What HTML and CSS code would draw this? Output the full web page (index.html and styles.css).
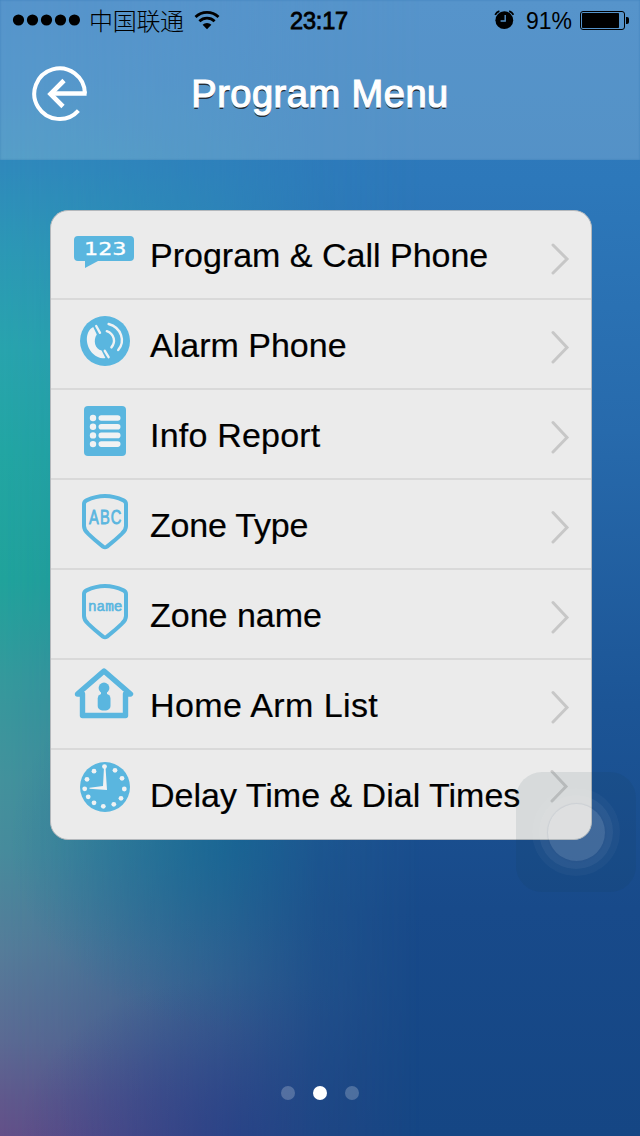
FILE: index.html
```html
<!DOCTYPE html>
<html>
<head>
  <meta charset="utf-8">
  <title>Program Menu</title>
  <link rel="stylesheet" href="styles.css">
</head>

<body>
  <div class="screen">
    <header class="header">
      <!-- status bar -->
      <div class="status">
        <div class="status-left">
          <svg class="signal" width="68" height="12" viewBox="0 0 68 12">
            <circle cx="6.5" cy="6" r="5.6"/>
            <circle cx="20.5" cy="6" r="5.6"/>
            <circle cx="34.5" cy="6" r="5.6"/>
            <circle cx="48.5" cy="6" r="5.6"/>
            <circle cx="62.4" cy="6" r="5.6"/>
          </svg>
          <span class="carrier">中国联通</span>
          <svg class="wifi" width="26" height="20" viewBox="0 0 26 20">
            <path d="M1.5 7 A16.5 16.5 0 0 1 24.5 7" fill="none" stroke="#000" stroke-width="2.8"/>
            <path d="M5.4 11.2 A11 11 0 0 1 20.6 11.2" fill="none" stroke="#000" stroke-width="2.8"/>
            <path d="M8.6 14.8 A6.4 6.4 0 0 1 17.4 14.8 L13 19.2 Z"/>
          </svg>
        </div>
        <span class="time">23:17</span>
        <div class="status-right">
          <svg width="20" height="20" viewBox="0 0 20 20">
            <circle cx="10.3" cy="10.2" r="8.9"/>
            <path d="M1.2 4.8 A7 7 0 0 1 5.4 1.2 M15.2 1.2 A7 7 0 0 1 19.4 4.8" fill="none" stroke="#000" stroke-width="1.8"/>
            <path d="M11.2 5 V11 H6.6" fill="none" stroke="#5592c8" stroke-width="1.4"/>
          </svg>
          <span class="percent">91%</span>
          <svg width="49" height="19" viewBox="0 0 49 19">
            <rect x="0.5" y="0.5" width="44" height="18" rx="2.5" fill="none" stroke="#000"/>
            <rect x="2" y="2" width="37" height="15" rx="0.8"/>
            <path d="M46 6 h1 a2 2 0 0 1 2 2 v3 a2 2 0 0 1 -2 2 h-1 Z"/>
          </svg>
        </div>
      </div>
      <div class="nav">
        <svg class="back" width="56" height="56" viewBox="0 0 56 56" fill="none" stroke="#fff">
          <path d="M52.9 27.5 A25.3 25.3 0 1 0 46.4 44.6" stroke-width="4"/>
          <path d="M54.6 27.5 H20" stroke-width="4.6"/>
          <path d="M32 14.5 L18.5 28 L31 40.5" stroke-width="4.6"/>
        </svg>
        <h1 class="title">Program Menu</h1>
      </div>
    </header>

    <ul class="menu">
      <li class="item first">
        <svg class="icon" viewBox="0 0 100 90">
          <path d="M28 26 H80 a4 4 0 0 1 4 4 V47 a4 4 0 0 1 -4 4 H48 L35 58 V51 H28 a4 4 0 0 1 -4 -4 V30 a4 4 0 0 1 4 -4 Z"/>
          <text class="num" x="34" y="45" textLength="42.5" lengthAdjust="spacingAndGlyphs">123</text>
        </svg>
        <span class="label">Program &amp; Call Phone</span>
        <svg class="arrow" viewBox="0 0 20 34"><path d="M3 3 L17 17 L3 31"/></svg>
      </li>
      <li class="item">
        <svg class="icon" viewBox="0 0 100 90">
          <circle cx="55" cy="41" r="25"/>
          <path class="light" d="M43.2 27 C34.6 31.5 35 46 43 53.8 C47 57.6 51 58.8 55.4 58 L51.6 50.6 C45 49.6 42.8 40 46.8 34.6 Z"/>
          <path class="thin" d="M46.2 26 L50 32.8 M54.8 50.8 L58.6 57.2"/>
          <path class="thin" d="M56.8 31.2 C64.4 34 66 42 61.4 47.4"/>
          <path class="thin" d="M58.6 24 C71.6 27.6 75.6 41.6 68.2 50"/>
        </svg>
        <span class="label">Alarm Phone</span>
        <svg class="arrow" viewBox="0 0 20 34"><path d="M3 2.5 L17 17.5 L3 32"/></svg>
      </li>
      <li class="item">
        <svg class="icon" viewBox="0 0 100 90">
          <rect x="34" y="16" width="42" height="50" rx="4"/>
          <g class="light">
            <circle cx="43" cy="28" r="3.2"/><rect x="48.5" y="25.2" width="22" height="5.6" rx="2.8"/>
            <circle cx="43" cy="36.7" r="3.2"/><rect x="48.5" y="33.9" width="22" height="5.6" rx="2.8"/>
            <circle cx="43" cy="45.4" r="3.2"/><rect x="48.5" y="42.6" width="22" height="5.6" rx="2.8"/>
            <circle cx="43" cy="54.1" r="3.2"/><rect x="48.5" y="51.3" width="22" height="5.6" rx="2.8"/>
          </g>
        </svg>
        <span class="label wide">Info Report</span>
        <svg class="arrow" viewBox="0 0 20 34"><path d="M3 2.5 L17 17.5 L3 32"/></svg>
      </li>
      <li class="item">
        <svg class="icon" viewBox="0 0 100 90">
          <path class="shield" d="M34 24 Q34 21.6 36.5 20.4 Q55 11.6 73.5 20.4 Q76 21.6 76 24 V46 Q76 50 72 53.6 Q66 59.5 57 66.6 Q55 68 53 66.6 Q44 59.5 38 53.6 Q34 50 34 46 Z"/>
          <text class="abc" x="39" y="44" textLength="33.5" lengthAdjust="spacingAndGlyphs">ABC</text>
        </svg>
        <span class="label narrow">Zone Type</span>
        <svg class="arrow" viewBox="0 0 20 34"><path d="M3 2.5 L17 17.5 L3 32"/></svg>
      </li>
      <li class="item">
        <svg class="icon" viewBox="0 0 100 90">
          <path class="shield" d="M34 24 Q34 21.6 36.5 20.4 Q55 11.6 73.5 20.4 Q76 21.6 76 24 V46 Q76 50 72 53.6 Q66 59.5 57 66.6 Q55 68 53 66.6 Q44 59.5 38 53.6 Q34 50 34 46 Z"/>
          <text class="name" x="38" y="41.3" textLength="34.5" lengthAdjust="spacingAndGlyphs">name</text>
        </svg>
        <span class="label">Zone name</span>
        <svg class="arrow" viewBox="0 0 20 34"><path d="M3 2.5 L17 17.5 L3 32"/></svg>
      </li>
      <li class="item">
        <svg class="icon" viewBox="0 0 100 90">
          <path class="house" d="M32.5 34 H27.5 L54 11 L80.5 34 H75.5 V55.5 H32.5 Z"/>
          <circle cx="54" cy="28" r="5.4"/>
          <path d="M51 31 H57 V35 H51 Z"/>
          <rect x="47.7" y="34" width="12.8" height="16.4" rx="4.5"/>
        </svg>
        <span class="label wider">Home Arm List</span>
        <svg class="arrow" viewBox="0 0 20 34"><path d="M3 2.5 L17 17.5 L3 32"/></svg>
      </li>
      <li class="item last">
        <svg class="icon" viewBox="0 0 100 90">
          <circle cx="55" cy="37" r="25"/>
          <g class="light">
            <circle cx="54.5" cy="16.6" r="2.4"/>
            <circle cx="65" cy="20.3" r="2.4"/>
            <circle cx="72" cy="28.3" r="2.4"/>
            <circle cx="74.3" cy="39" r="2.4"/>
            <circle cx="71" cy="48.3" r="2.4"/>
            <circle cx="63.8" cy="54.3" r="2.4"/>
            <circle cx="53.3" cy="56.3" r="2.4"/>
            <circle cx="44" cy="52.8" r="2.4"/>
            <circle cx="38.2" cy="46.8" r="2.4"/>
            <circle cx="34.7" cy="38.8" r="2.4"/>
            <circle cx="37" cy="29.3" r="2.4"/>
            <circle cx="44" cy="21.2" r="2.4"/>
            <path d="M54 17 H55.5 L57 40 L39.5 38.8 V37.8 L53 36 Z"/>
          </g>
        </svg>
        <span class="label">Delay Time &amp; Dial Times</span>
        <svg class="arrow" viewBox="0 0 20 34"><path d="M3 2.5 L17 17.5 L3 32"/></svg>
      </li>
    </ul>

    <div class="pager">
      <span class="dot"></span>
      <span class="dot active"></span>
      <span class="dot"></span>
    </div>

    <!-- floating touch button -->
    <div class="touch">
      <div class="ring outer"><div class="ring middle"><div class="ring inner"></div></div></div>
    </div>
  </div>
</body>
</html>
```
FILE: styles.css
```css
body {
  margin: 0;
  font-family: "Liberation Sans", Arial, sans-serif;
}

.screen {
  position: relative;
  isolation: isolate;
  display: flex;
  flex-direction: column;
  width: 640px;
  height: 1136px;
  overflow: hidden;
  background: linear-gradient(#2f7cbf 0, #2d78ba 16%, #276aac 38%, #1c5596 62%, #184a8a 80%, #154684 100%);
}

/* coloured glow down the left side */
.screen::before {
  content: "";
  position: absolute;
  z-index: -1;
  left: 0;
  top: 0;
  width: 420px;
  height: 1136px;
  background:
    radial-gradient(ellipse 230px 190px at 240px 840px, rgba(15, 125, 155, 0.8), rgba(20, 120, 155, 0.4) 50%, rgba(20, 120, 155, 0) 100%),
    radial-gradient(ellipse 220px 160px at 240px 1136px, rgba(45, 55, 140, 0.6), rgba(45, 60, 140, 0) 100%),
    linear-gradient(#2f7cbf 0, #2f80bf 80px, #2f8abb 170px, #2c98b5 250px, #28a4ad 350px, #22a6a3 450px, #20a39b 580px, #35999c 680px, #43929c 780px, #478c9c 850px, #557c99 950px, #5b6a93 1040px, #60588c 1100px, #635088 1136px);
  -webkit-mask-image: linear-gradient(to right, #000 0, rgba(0, 0, 0, 0.9) 14%, rgba(0, 0, 0, 0.72) 32%, rgba(0, 0, 0, 0.48) 54%, rgba(0, 0, 0, 0.16) 76%, rgba(0, 0, 0, 0) 100%);
  mask-image: linear-gradient(to right, #000 0, rgba(0, 0, 0, 0.9) 14%, rgba(0, 0, 0, 0.72) 32%, rgba(0, 0, 0, 0.48) 54%, rgba(0, 0, 0, 0.16) 76%, rgba(0, 0, 0, 0) 100%);
}

.header {
  height: 160px;
  background: rgba(255, 255, 255, 0.19);
  box-shadow: inset 0 0 2px rgba(40, 110, 170, 0.6);
}

.status {
  display: grid;
  grid-template-columns: 1fr auto 1fr;
  align-items: center;
  height: 40px;
  padding: 0 11px 0 12px;
}

.status-left,
.status-right {
  display: flex;
  align-items: center;
}

.status-right {
  justify-content: flex-end;
}

.carrier {
  margin: 0 10px 0 9px;
  font-family: "Noto Sans CJK SC", sans-serif;
  font-size: 24px;
  font-weight: 300;
  line-height: 40px;
  letter-spacing: -0.3px;
}

.time {
  margin: 2px 3px 0 0;
  font-size: 23.5px;
  letter-spacing: -0.2px;
  -webkit-text-stroke: 0.8px #000;
}

.percent {
  margin: 2px 8px 0 12px;
  font-size: 23px;
}

.nav {
  display: grid;
  grid-template-columns: 60px 1fr 60px;
  align-items: center;
  height: 108px;
  padding: 0 31px;
}

.back {
  margin-left: 1px;
}

.title {
  margin: 0;
  color: white;
  font-size: 38px;
  font-weight: normal;
  text-align: center;
  letter-spacing: 0.5px;
  -webkit-text-stroke: 1.2px white;
  text-shadow: 0 2px 0 #222d38;
}

.menu {
  width: 540px;
  margin: 50px 0 0 50px;
  padding: 0;
  list-style: none;
  background: #ebebeb;
  border: 1px solid #b4b8bc;
  border-radius: 18px;
  box-sizing: content-box;
}

.item {
  display: flex;
  align-items: center;
  height: 88px;
  border-bottom: 2px solid #d9d9d9;
}

.first {
  height: 87px;
}

.last {
  height: 89px;
  border-bottom: none;
}

.icon {
  width: 100px;
  height: 90px;
  margin-left: -1px;
  flex: none;
  align-self: flex-start;
  fill: #5ab6df;
}

.first .icon {
  margin-top: -1px;
}

.label {
  flex: 1;
  margin-top: 2px;
  font-size: 34px;
  line-height: 40px;
  white-space: nowrap;
  -webkit-text-stroke: 0.2px #000;
}

.first .label {
  margin-top: 1px;
}

.last .label {
  margin-top: 0;
}

.wide {
  letter-spacing: 0.2px;
}

.wider {
  letter-spacing: 0.4px;
}

.narrow {
  letter-spacing: -0.2px;
}

.arrow {
  width: 20px;
  height: 34px;
  margin: 5px 21.5px 0 0;
  fill: none;
  stroke: #c7c7c7;
  stroke-width: 3;
  stroke-linecap: round;
}

.first .arrow {
  margin-top: 9px;
}

.last .arrow {
  margin: -17px 22.5px 0 0;
}

.light {
  fill: #f0f2f3;
}

.thin {
  fill: none;
  stroke: #f0f2f3;
  stroke-width: 2.4;
  stroke-linecap: round;
}

.shield {
  fill: none;
  stroke: #5ab6df;
  stroke-width: 4;
}

.house {
  fill: none;
  stroke: #5ab6df;
  stroke-width: 5.4;
  stroke-linejoin: round;
}

.num {
  fill: #fff;
  font-family: "DejaVu Sans", sans-serif;
  font-size: 17.5px;
  stroke: #fff;
  stroke-width: 0.3;
}

.abc {
  font-size: 19.5px;
  letter-spacing: 1.5px;
  stroke: #5ab6df;
  stroke-width: 0.8;
}

.name {
  font-family: "Liberation Mono", monospace;
  font-size: 14.5px;
  stroke: #5ab6df;
  stroke-width: 0.6;
}

.pager {
  display: flex;
  justify-content: center;
  gap: 18px;
  margin: auto 0 36px;
}

.dot {
  width: 14px;
  height: 14px;
  border-radius: 50%;
  background: rgba(255, 255, 255, 0.22);
}

.active {
  background: white;
}

.touch {
  position: absolute;
  left: 516px;
  top: 772px;
  display: flex;
  align-items: center;
  justify-content: center;
  width: 120px;
  height: 120px;
  border-radius: 26px;
  background: rgba(20, 50, 70, 0.09);
}

.ring {
  display: flex;
  align-items: center;
  justify-content: center;
  border-radius: 50%;
}

.outer {
  width: 88px;
  height: 88px;
  background: rgba(255, 255, 255, 0.03);
}

.middle {
  width: 74px;
  height: 74px;
  background: rgba(255, 255, 255, 0.05);
}

.inner {
  width: 57px;
  height: 57px;
  background: rgba(255, 255, 255, 0.11);
  box-shadow: 0 0 1px 1px rgba(40, 70, 110, 0.08);
}
```
